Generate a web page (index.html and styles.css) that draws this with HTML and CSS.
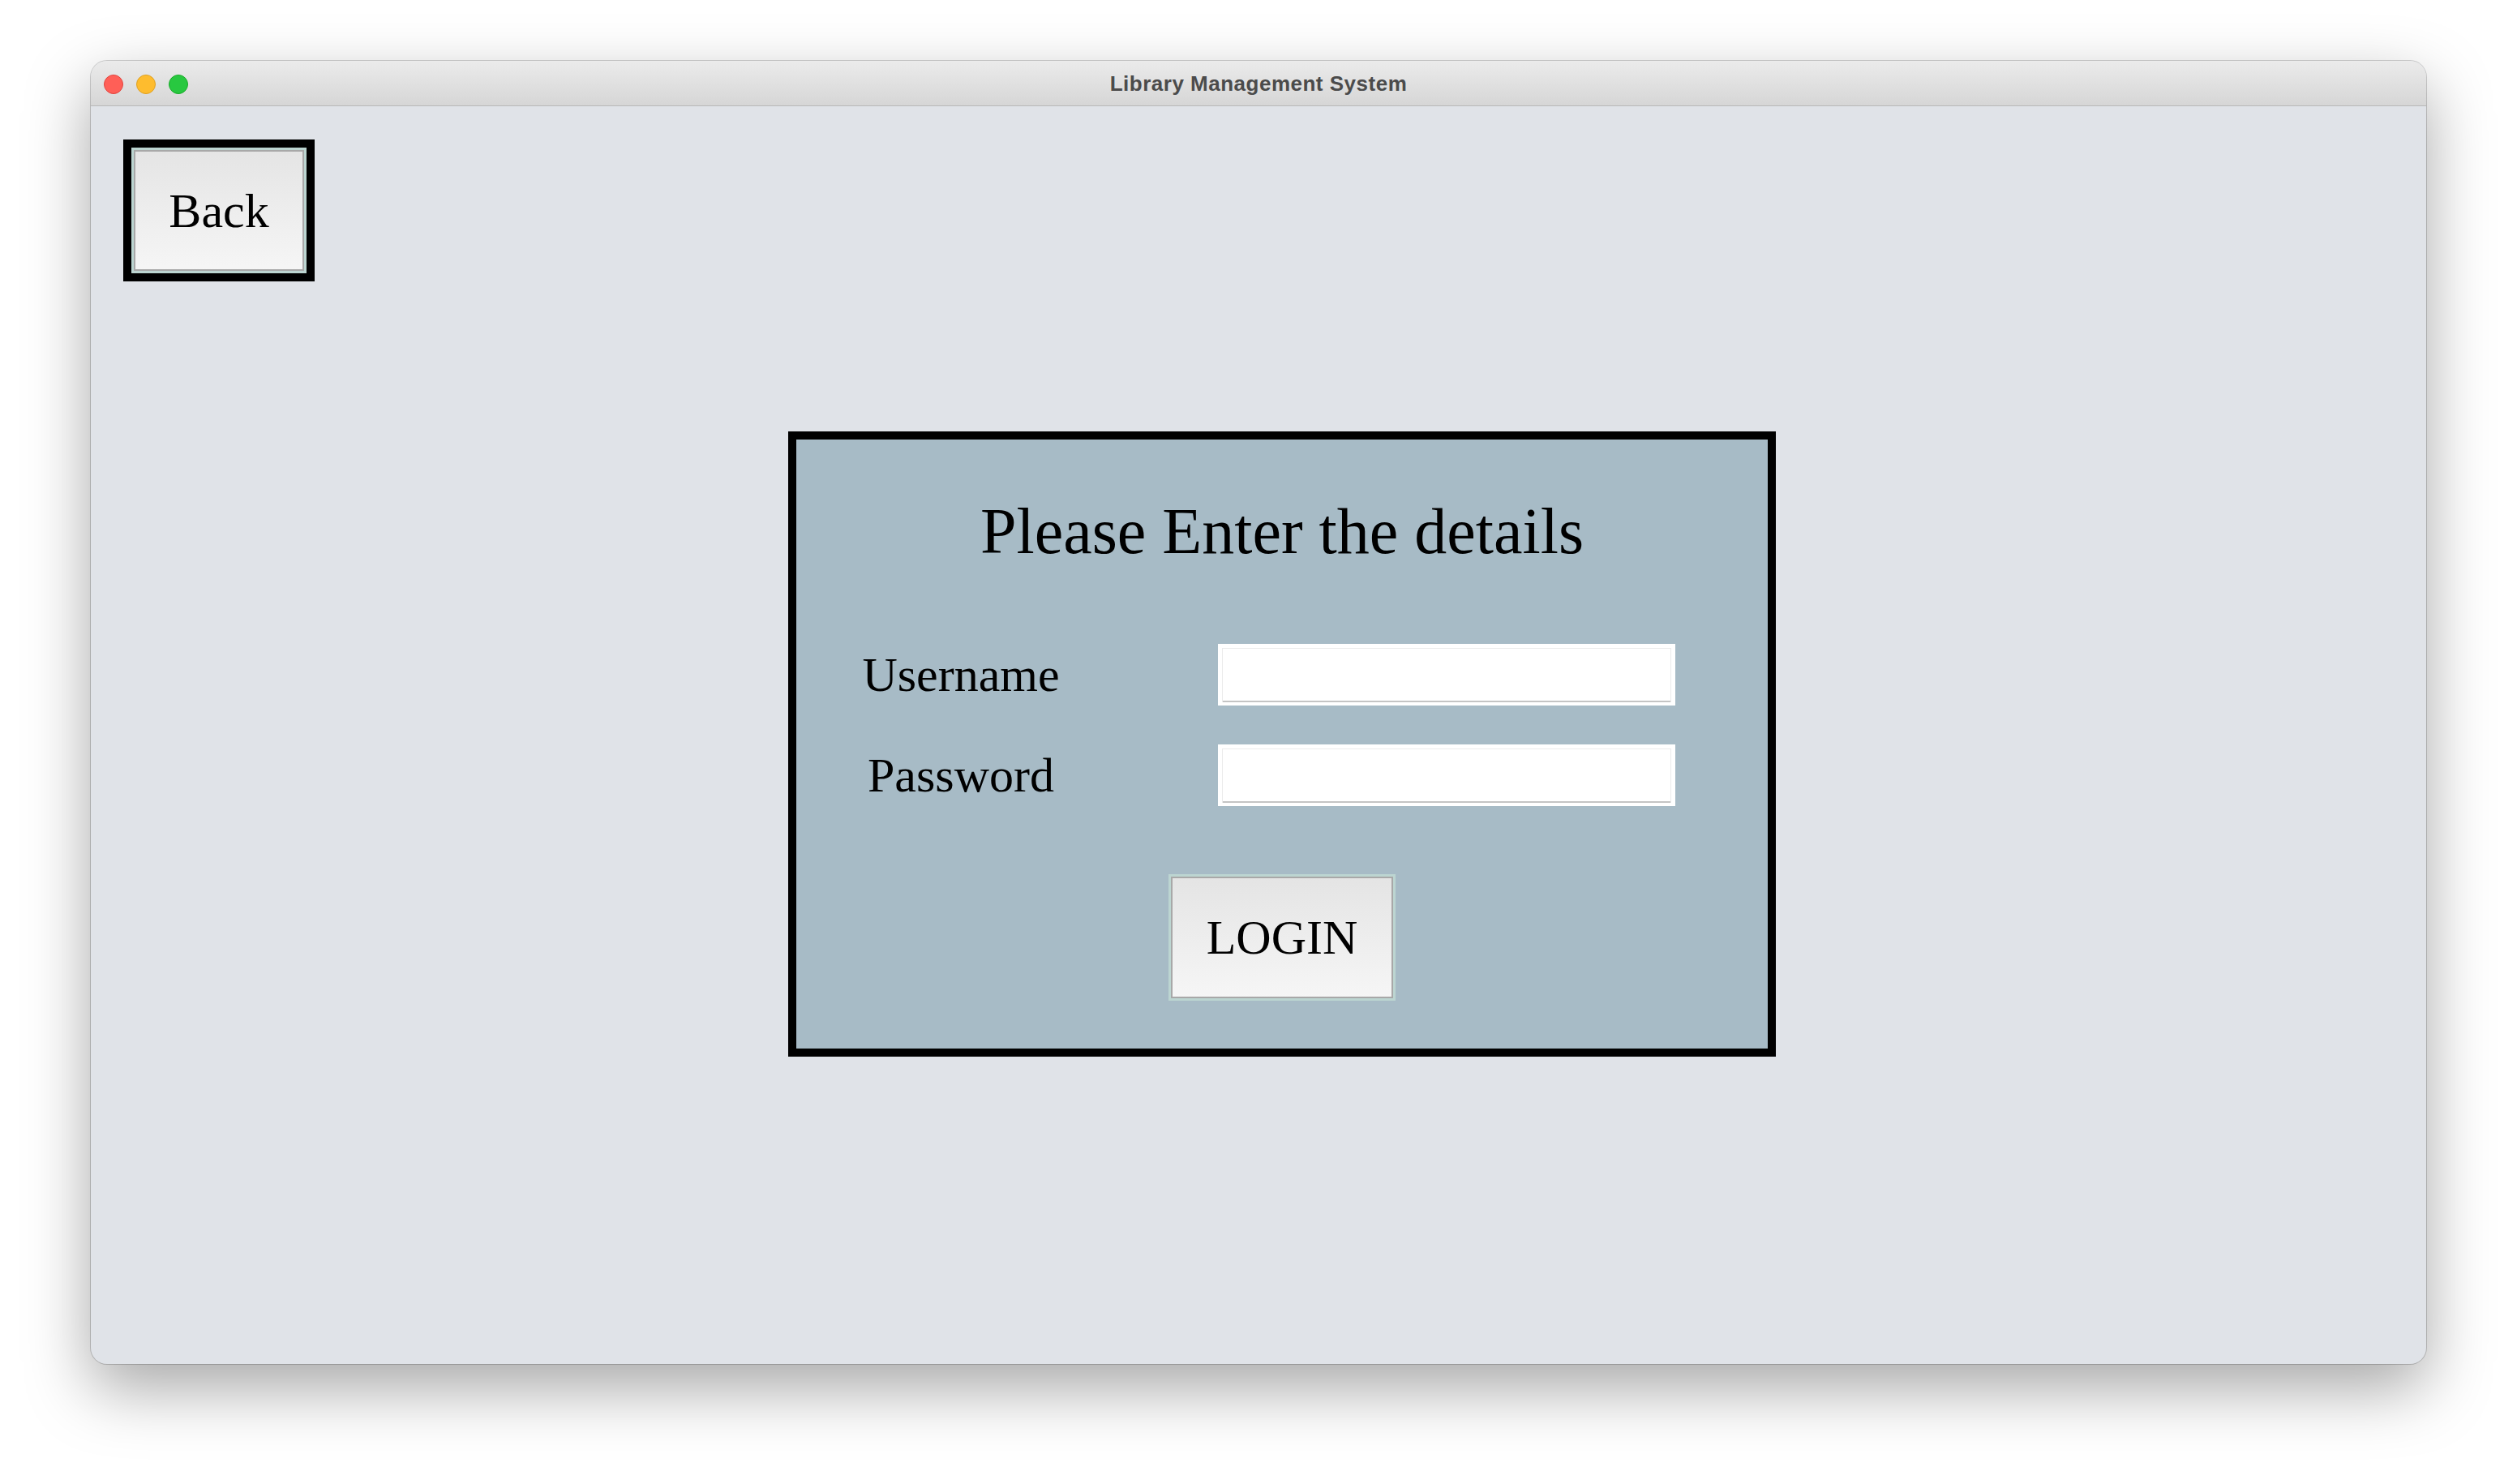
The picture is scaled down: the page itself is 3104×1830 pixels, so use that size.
FILE: index.html
```html
<!DOCTYPE html>
<html lang="en">
<head>
  <meta charset="UTF-8">
  <meta name="viewport" content="width=device-width, initial-scale=1">
  <title>Library Management System</title>
  <link rel="stylesheet" href="styles.css">
</head>
<body>
  <!-- App window -->
  <div class="window">
    <div class="titlebar">
      <div class="lights">
        <span class="light red"></span>
        <span class="light yellow"></span>
        <span class="light green"></span>
      </div>
      <div class="title">Library Management System</div>
      <div></div>
    </div>

    <div class="content">
      <button class="btn back-btn">Back</button>

      <!-- Login form -->
      <div class="login-box">
        <h1>Please Enter the details</h1>
        <div class="fields">
          <label for="username">Username</label>
          <input type="text" id="username">
          <label for="password">Password</label>
          <input type="password" id="password">
        </div>
        <button class="btn login-btn">LOGIN</button>
      </div>
    </div>
  </div>
</body>
</html>
```

FILE: styles.css
```css
/* Page / desktop */
html, body {
  height: 100%;
}
body {
  margin: 0;
  box-sizing: border-box;
  padding: 75px 0 148px 112px;
  background: #ffffff;
  font-family: "Liberation Serif", "Times New Roman", serif;
}

.window {
  position: relative;
  width: 2880px;
  height: 1607px;
  border-radius: 20px;
  overflow: hidden;
  background: #e0e3e8;
  box-shadow: 0 0 0 1px rgba(0,0,0,0.18), 0 30px 80px rgba(0,0,0,0.35);
  display: flex;
  flex-direction: column;
}

/* Title bar */
.titlebar {
  height: 55px;
  flex-shrink: 0;
  border-bottom: 1px solid #b8b8b8;
  background: linear-gradient(#ebebeb, #d6d6d6);
  display: grid;
  grid-template-columns: 1fr auto 1fr;
  align-items: center;
}
.lights {
  display: flex;
  gap: 16px;
  padding-left: 16px;
  padding-top: 2px;
}
.light {
  width: 22px;
  height: 22px;
  border-radius: 50%;
  border: 1px solid transparent;
}
.red { background: #ff5f57; border-color: #e0443e; }
.yellow { background: #febc2e; border-color: #dea123; }
.green { background: #28c840; border-color: #1aab29; }
.title {
  font-family: "Liberation Sans", Arial, sans-serif;
  font-weight: bold;
  font-size: 26px;
  letter-spacing: 0.5px;
  color: #4b4b4b;
  padding-top: 2px;
}

/* Content area */
.content {
  flex: 1;
  padding: 41px 0 0 40px;
  display: flex;
  flex-direction: column;
  align-items: flex-start;
}

.btn {
  font-family: "Liberation Serif", "Times New Roman", serif;
  font-size: 60px;
  line-height: 60px;
  color: #000;
  padding: 0;
  cursor: pointer;
  background: linear-gradient(#e4e4e4, #f6f6f6);
  box-sizing: border-box;
}
.back-btn {
  width: 236px;
  height: 175px;
  border: 10px solid #000;
  box-shadow: inset 0 0 0 3px #bcd5d1, inset 0 0 0 5px #a8a8a8;
}

.login-box {
  box-sizing: border-box;
  width: 1218px;
  margin: 185px 0 0 820px;
  border: 10px solid #000;
  background: #a7bbc6;
  padding: 73px 0 59px;
}
.login-box h1 {
  margin: 0;
  font-size: 80px;
  line-height: 80px;
  font-weight: normal;
  text-align: center;
}

.fields {
  display: grid;
  grid-template-columns: 270px 564px;
  column-gap: 182px;
  row-gap: 48px;
  margin: 99px 0 0 68px;
}
.fields label {
  font-size: 60px;
  line-height: 76px;
  text-align: center;
}
.fields input {
  box-sizing: border-box;
  width: 564px;
  height: 76px;
  margin: 0;
  padding: 0;
  border: 5px solid #fff;
  border-bottom-width: 4px;
  background: #fff;
  outline: none;
  box-shadow: inset 1px 1px 0 #ebebeb, inset -1px 0 0 #ebebeb, inset 0 -2px 0 #c4c4c4;
}

.login-btn {
  display: block;
  width: 280px;
  height: 156px;
  margin: 84px auto 0;
  border: 3px solid #bcd5d1;
  box-shadow: inset 0 0 0 2px #a8a8a8;
}
```
